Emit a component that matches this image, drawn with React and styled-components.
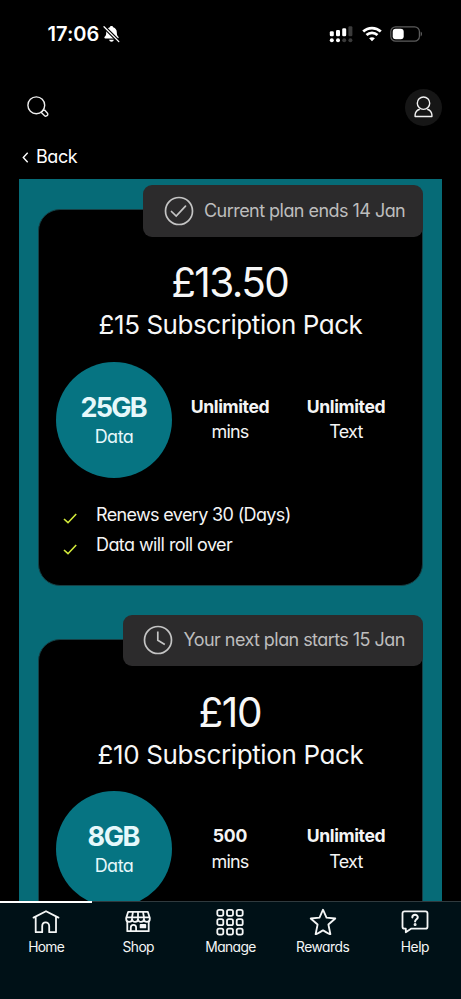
import React from 'react';
import styled, { createGlobalStyle } from 'styled-components';

const GlobalStyle = createGlobalStyle`
  * { box-sizing: border-box; }
  body {
    margin: 0;
    background: #000;
    color: #fff;
    font-family: Inter, "Liberation Sans", sans-serif;
    font-feature-settings: "cv11";
  }
  svg { display: block; flex: none; }
`;

const Screen = styled.div`
  display: flex;
  flex-direction: column;
  width: 461px;
  height: 999px;
  overflow: hidden;
  background: #000;
`;

const StatusBar = styled.header`
  display: flex;
  flex: none;
  align-items: center;
  justify-content: space-between;
  height: 69px;
  padding: 0 38px 1px 47.5px;
`;

const Clock = styled.div`
  display: flex;
  align-items: center;
  gap: 3.5px;
  font-size: 20px;
  font-weight: 600;
  line-height: 24px;
  letter-spacing: 0.05px;
  font-feature-settings: normal;
`;

const StatusIcons = styled.div`
  display: flex;
  align-items: center;
  gap: 8.5px;
`;

const TopBar = styled.div`
  display: flex;
  flex: none;
  align-items: center;
  justify-content: space-between;
  height: 76px;
  padding: 0 19px 0 26.500px;
`;

const Profile = styled.div`
  display: flex;
  align-items: center;
  justify-content: center;
  width: 37px;
  height: 37px;
  border-radius: 50%;
  background: #161616;
`;

const BackLink = styled.div`
  display: flex;
  flex: none;
  align-items: center;
  gap: 7px;
  height: 34px;
  padding: 0 22px 10px;
  font-size: 18px;
  line-height: 24px;
  letter-spacing: -0.45px;
`;

const Panel = styled.main`
  display: flex;
  flex: 1;
  flex-direction: column;
  gap: 53px;
  min-height: 0;
  margin: 0 19px;
  padding: 30.400px 19px 0;
  overflow: hidden;
  background: #066b77;
`;

const Card = styled.section`
  position: relative;
  display: flex;
  flex: none;
  flex-direction: column;
  height: 376.300px;
  padding: 49px 17px 0;
  border: 1px solid #163f44;
  border-radius: 22px;
  background: #000;
`;

const Badge = styled.div`
  position: absolute;
  top: -25px;
  right: -1px;
  display: flex;
  align-items: center;
  gap: 10.5px;
  height: 51.500px;
  width: ${p => p.$width}px;
  padding-left: 20.5px;
  border-radius: 9px;
  background: #2c2b2c;
  color: #bdbdbd;
  font-size: 18px;
  line-height: 24px;
  letter-spacing: ${p => p.$tracking}px;
  white-space: nowrap;
`;

const Price = styled.div`
  height: 48px;
  font-size: 40.5px;
  font-weight: 430;
  line-height: 48px;
  letter-spacing: ${p => p.$tracking}px;
  text-indent: ${p => p.$tracking}px;
  text-align: center;
  color: #f7f7f7;
`;

const PackName = styled.div`
  height: 36px;
  font-size: 26px;
  line-height: 36px;
  letter-spacing: ${p => p.$tracking}px;
  text-align: center;
  white-space: nowrap;
  color: #f7f7f7;
`;

const Allowances = styled.div`
  display: grid;
  grid-template-columns: repeat(3, 116px);
  height: 116px;
  margin-top: 18.5px;
`;

const DataCircle = styled.div`
  height: 116px;
  padding-top: 30px;
  border-radius: 50%;
  background: #067482;
  color: #e6f8fb;
  text-align: center;
`;

const DataAmount = styled.div`
  font-size: 27px;
  font-weight: 700;
  line-height: 32px;
  letter-spacing: ${p => p.$tracking}px;
  text-indent: ${p => p.$tracking}px;
`;

const Allowance = styled.div`
  padding-top: 32px;
  text-align: center;
  color: #f4f4f4;
`;

const Amount = styled.div`
  font-size: 17.6px;
  font-weight: 650;
  line-height: 25.6px;
  letter-spacing: ${p => p.$tracking}px;
`;

const Unit = styled.div`
  font-size: 18px;
  line-height: 25.6px;
  letter-spacing: ${p => p.$tracking}px;
`;

const Features = styled.ul`
  margin: 21.500px 0 0;
  padding: 0;
  list-style: none;
`;

const Feature = styled.li`
  display: flex;
  align-items: center;
  gap: 19.500px;
  height: 30.6px;
  padding-left: 6.500px;
  font-size: 18px;
  line-height: 30px;
  letter-spacing: ${p => p.$tracking}px;
  color: #f4f4f4;
`;

const Tick = styled.svg`
  margin-top: 8px;
`;

const NavBar = styled.nav`
  display: grid;
  flex: none;
  grid-template-columns: repeat(5, 1fr);
  height: 98.5px;
  background: #001117;
`;

const NavItem = styled.div`
  display: flex;
  flex-direction: column;
  align-items: center;
  padding-top: ${p => (p.$active ? 4 : 5)}px;
  border-top: ${p => (p.$active ? '2px solid #fff' : '1px solid #2f3a3e')};
  color: #f4f6f6;
`;

const NavIcon = styled.svg`
  width: 30px;
  height: 30px;
  fill: none;
  stroke: currentColor;
  stroke-width: 1.8;
  stroke-linecap: round;
  stroke-linejoin: round;
`;

const NavLabel = styled.div`
  margin-top: 0.5px;
  font-size: 13.8px;
  line-height: 20px;
  letter-spacing: ${p => p.$tracking}px;
`;

const BellOff = () => (
  <svg width="17" height="18" viewBox="0 0 17 18">
    <path d="M8.5 1c-.9 0-1.5.5-1.7 1.2C4.5 3 3.2 4.900 3.2 7.200c0 2.700-.5 3.500-1.500 4.600-.7.800-.3 1.700.7 1.700h12.200c1 0 1.400-.9.700-1.700-1-1.100-1.500-1.900-1.500-4.600 0-2.300-1.300-4.200-3.600-5C10 1.500 9.400 1 8.500 1ZM6.100 14.700c.3 1.300 1.200 2 2.400 2s2.100-.7 2.400-2Z" fill="#fff" />
    <path d="M1 1.800 15.800 16.600" stroke="#000" strokeWidth="3.6" />
    <path d="M1 1.800 15.800 16.600" stroke="#fff" strokeWidth="1.3" strokeLinecap="round" />
  </svg>
);

const Signal = () => (
  <svg width="24" height="18" viewBox="0 0 24 18" fill="#fff">
    <rect x=".8" y="6.3" width="4" height="5" rx="1.3" />
    <rect x="7" y="5" width="4" height="6.3" rx="1.3" />
    <rect x="13.2" y="3.2" width="4" height="8.1" rx="1.3" />
    <rect x="19.4" y="1.2" width="4" height="10.1" rx="1.3" fill="#3b3b3b" />
    <circle cx="2.8" cy="15.2" r="2" />
    <circle cx="9" cy="15.2" r="2" />
    <circle cx="15.2" cy="15.2" r="2" fill="#3b3b3b" />
    <circle cx="21.4" cy="15.2" r="2" fill="#3b3b3b" />
  </svg>
);

const Wifi = () => (
  <svg width="20" height="16" viewBox="0 0 20 16" fill="none" stroke="#fff" strokeWidth="2.7">
    <path d="M1.2 5.6c5-4.700 12.600-4.700 17.600 0" />
    <path d="M4.5 9.1c3.100-2.900 7.900-2.900 11 0" />
    <path d="m7.100 12.300 2.900 3 2.900-3c-1.700-1.400-4.100-1.400-5.800 0Z" fill="#fff" stroke="none" />
  </svg>
);

const Battery = () => (
  <svg width="33" height="16" viewBox="0 0 33 16">
    <rect x=".8" y=".8" width="28.6" height="14.4" rx="4.8" fill="none" stroke="#5c5c5c" strokeWidth="1.2" />
    <rect x="2.7" y="2.7" width="11" height="10.6" rx="3" fill="#fff" />
    <path d="M30.700 5.600v4.800c1.600-.7 1.600-4.100 0-4.800Z" fill="#6a6a6a" />
  </svg>
);

const Search = () => (
  <svg width="22" height="22" viewBox="0 0 22 22" fill="none" stroke="#eee" strokeWidth="1.4">
    <circle cx="9.3" cy="9.3" r="8.4" />
    <path d="m14.500 15.900 1.200-1.200 1.900-.6 2.700 2.900c.8.900.6 1.900-.2 2.600-.8.800-1.800.9-2.500.1l-2.800-2.700Z" strokeLinejoin="round" />
  </svg>
);

const Person = () => (
  <svg width="19" height="22" viewBox="0 0 19 22" fill="none" stroke="#f1f1f1" strokeWidth="1.4">
    <circle cx="9.5" cy="7.2" r="6.2" />
    <path d="M5.800 13.200c-2.700.7-4.400 2.600-4.700 5.600v1.700h16.800v-1.700c-.3-3-2-4.900-4.700-5.600" strokeLinejoin="round" />
  </svg>
);

const ChevronLeft = () => (
  <svg width="7" height="11" viewBox="0 0 7 11" fill="none" stroke="#fff" strokeWidth="1.4">
    <path d="M5.700.8 1.300 5.500l4.400 4.700" />
  </svg>
);

const badgeIcons = {
  check: <path d="m7.500 15.500 4.700 4.500L21.500 10.200" strokeLinecap="round" />,
  clock: <path d="M14.800 6.500v8.800l7 4.100" />,
};

const BadgeIcon = ({ name }) => (
  <svg width="30" height="30" viewBox="0 0 30 30" fill="none" stroke="#c4c4c4" strokeWidth="1.7">
    <circle cx="15" cy="15" r="13.5" />
    {badgeIcons[name]}
  </svg>
);

const LimeTick = () => (
  <Tick width="14" height="11" viewBox="0 0 14 11" fill="none" stroke="#d3ea3a" strokeWidth="1.6">
    <path d="m1 6 4 3.700L13.200 1" />
  </Tick>
);

const navIcons = {
  home: (
    <path d="M2.500 10.600 15 4.200l12.500 6.400M4.700 9.700v15.500h6.500v-5.900c0-5.200 7-5.200 7 0v5.900h6.800V9.700" />
  ),
  shop: (
    <>
      <path d="M5.200 4.800h19.600l2 6.200v1a2.900 2.900 0 0 1-5.900 0 2.900 2.900 0 0 1-5.900 0 2.900 2.900 0 0 1-5.900 0 2.900 2.900 0 0 1-5.900 0v-1ZM3.300 10.300h23.400M10 4.800 8.900 11M15 4.800V11M20 4.800 21.100 11" />
      <path d="M4.300 14.500v9.700h21.400v-9.700M7.800 24.200V20.600c0-3.600 5.300-3.600 5.300 0v3.600" />
      <path d="M17.600 18h4.700v2.400h-4.700Z" fill="currentColor" />
    </>
  ),
  manage: [5.8, 15.2, 24.6].map(y =>
    [5.3, 15, 24.7].map(x => (
      <rect key={`${x}-${y}`} x={x - 3} y={y - 3} width="6" height="6" rx="1.8" />
    ))
  ),
  rewards: (
    <path d="m15 2.700 3.500 8 8.800.8-6.900 6 2 9.700c-1 .3-5.100-2.600-7.400-3.800-2.300 1.200-6.400 4.100-7.400 3.800l2-9.700-6.900-6 8.800-.8Z" />
  ),
  help: (
    <>
      <path d="M4.500 4.300h21c1.200 0 2 .8 2 2v13.400c0 1.200-.8 2-2 2H11L5.800 25.200v-3.500H4.500c-1.200 0-2-.8-2-2V6.300c0-1.200.8-2 2-2Z" />
      <path d="M12.300 10.400c.1-3.500 5.600-3.300 5.500-.2 0 2-2.700 2-2.700 4.300" strokeWidth="2" />
      <circle cx="15.1" cy="17.6" r=".6" fill="currentColor" />
    </>
  ),
};

const plans = [
  {
    badge: 'Current plan ends 14 Jan', icon: 'check', badgeWidth: 280, badgeTracking: -0.54,
    price: '£13.50', priceTracking: -1.6, name: '£15 Subscription Pack', nameTracking: -0.44,
    data: '25GB', dataTracking: -1.8, mins: 'Unlimited', minsTracking: -0.4,
    features: [['Renews every 30 (Days)', -0.65], ['Data will roll over', -0.58]],
  },
  {
    badge: 'Your next plan starts 15 Jan', icon: 'clock', badgeWidth: 300.5, badgeTracking: -0.56,
    price: '£10', priceTracking: -1.4, name: '£10 Subscription Pack', nameTracking: -0.37,
    data: '8GB', dataTracking: -1.4, mins: '500', minsTracking: -0.1,
    features: [],
  },
];

const tabs = [
  ['home', 'Home', -0.75], ['shop', 'Shop', -0.6], ['manage', 'Manage', -0.6],
  ['rewards', 'Rewards', -0.5], ['help', 'Help', -0.4],
];

const PlanCard = ({ plan }) => (
  <Card>
    <Badge $width={plan.badgeWidth} $tracking={plan.badgeTracking}>
      <BadgeIcon name={plan.icon} />
      <span>{plan.badge}</span>
    </Badge>
    <Price $tracking={plan.priceTracking}>{plan.price}</Price>
    <PackName $tracking={plan.nameTracking}>{plan.name}</PackName>
    <Allowances>
      <DataCircle>
        <DataAmount $tracking={plan.dataTracking}>{plan.data}</DataAmount>
        <Unit $tracking={-0.5}>Data</Unit>
      </DataCircle>
      <Allowance>
        <Amount $tracking={plan.minsTracking}>{plan.mins}</Amount>
        <Unit $tracking={-0.8}>mins</Unit>
      </Allowance>
      <Allowance>
        <Amount $tracking={-0.4}>Unlimited</Amount>
        <Unit $tracking={-0.7}>Text</Unit>
      </Allowance>
    </Allowances>
    <Features>
      {plan.features.map(([text, tracking]) => (
        <Feature key={text} $tracking={tracking}>
          <LimeTick />
          {text}
        </Feature>
      ))}
    </Features>
  </Card>
);

export default function App() {
  return (
    <>
      <GlobalStyle />
      <Screen>
        <StatusBar>
          <Clock>17:06 <BellOff /></Clock>
          <StatusIcons>
            <Signal />
            <Wifi />
            <Battery />
          </StatusIcons>
        </StatusBar>
        <TopBar>
          <Search />
          <Profile><Person /></Profile>
        </TopBar>
        <BackLink><ChevronLeft />Back</BackLink>
        <Panel>
          {plans.map(plan => <PlanCard key={plan.name} plan={plan} />)}
        </Panel>
        <NavBar>
          {tabs.map(([icon, label, tracking]) => (
            <NavItem key={icon} $active={icon === 'home'}>
              <NavIcon viewBox="0 0 30 30">{navIcons[icon]}</NavIcon>
              <NavLabel $tracking={tracking}>{label}</NavLabel>
            </NavItem>
          ))}
        </NavBar>
      </Screen>
    </>
  );
}
